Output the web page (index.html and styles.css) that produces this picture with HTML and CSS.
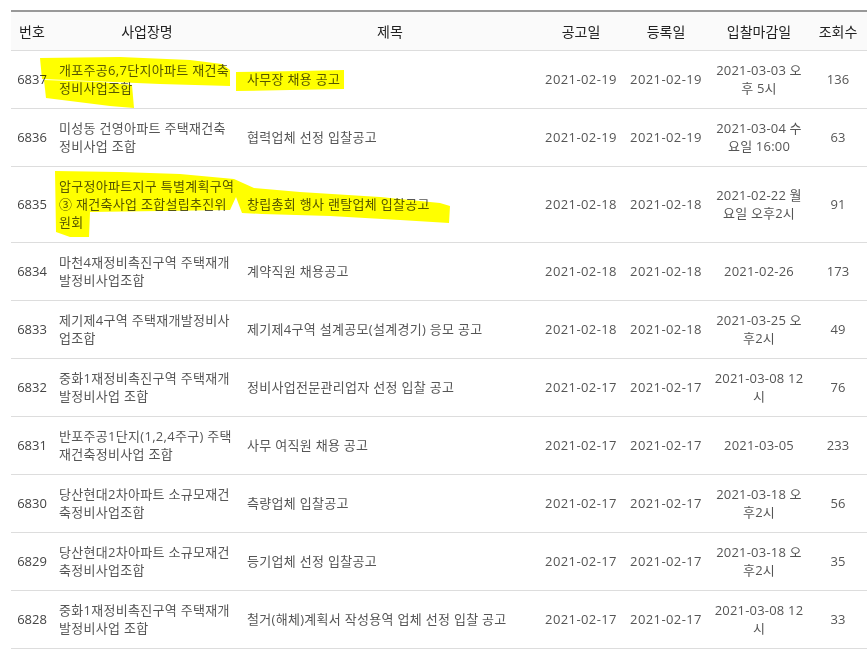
FILE: index.html
```html
<!DOCTYPE html>
<html lang="ko">
<head>
<meta charset="utf-8">
<title>입찰공고</title>
<link rel="stylesheet" href="styles.css">
</head>
<body>
<div class="page">
  <table class="board">
    <colgroup>
      <col class="c-no">
      <col class="c-name">
      <col class="c-title">
      <col class="c-date">
      <col class="c-reg">
      <col class="c-end">
      <col class="c-hit">
    </colgroup>
    <thead>
      <tr>
        <th>번호</th>
        <th>사업장명</th>
        <th>제목</th>
        <th>공고일</th>
        <th>등록일</th>
        <th>입찰마감일</th>
        <th>조회수</th>
      </tr>
    </thead>
    <tbody>
      <tr>
        <td class="no">6837</td>
        <td class="name">개포주공6,7단지아파트 재건축<br>정비사업조합</td>
        <td class="title">사무장 채용 공고</td>
        <td class="date">2021-02-19</td>
        <td class="date">2021-02-19</td>
        <td class="end">2021-03-03 오<br>후 5시</td>
        <td class="hit">136</td>
      </tr>
      <tr>
        <td class="no">6836</td>
        <td class="name">미성동 건영아파트 주택재건축<br>정비사업 조합</td>
        <td class="title">협력업체 선정 입찰공고</td>
        <td class="date">2021-02-19</td>
        <td class="date">2021-02-19</td>
        <td class="end">2021-03-04 수<br>요일 16:00</td>
        <td class="hit">63</td>
      </tr>
      <tr>
        <td class="no">6835</td>
        <td class="name">압구정아파트지구 특별계획구역<br>③ 재건축사업 조합설립추진위<br>원회</td>
        <td class="title">창립총회 행사 랜탈업체 입찰공고</td>
        <td class="date">2021-02-18</td>
        <td class="date">2021-02-18</td>
        <td class="end">2021-02-22 월<br>요일 오후2시</td>
        <td class="hit">91</td>
      </tr>
      <tr>
        <td class="no">6834</td>
        <td class="name">마천4재정비촉진구역 주택재개<br>발정비사업조합</td>
        <td class="title">계약직원 채용공고</td>
        <td class="date">2021-02-18</td>
        <td class="date">2021-02-18</td>
        <td class="end">2021-02-26</td>
        <td class="hit">173</td>
      </tr>
      <tr>
        <td class="no">6833</td>
        <td class="name">제기제4구역 주택재개발정비사<br>업조합</td>
        <td class="title">제기제4구역 설계공모(설계경기) 응모 공고</td>
        <td class="date">2021-02-18</td>
        <td class="date">2021-02-18</td>
        <td class="end">2021-03-25 오<br>후2시</td>
        <td class="hit">49</td>
      </tr>
      <tr>
        <td class="no">6832</td>
        <td class="name">중화1재정비촉진구역 주택재개<br>발정비사업 조합</td>
        <td class="title">정비사업전문관리업자 선정 입찰 공고</td>
        <td class="date">2021-02-17</td>
        <td class="date">2021-02-17</td>
        <td class="end">2021-03-08 12<br>시</td>
        <td class="hit">76</td>
      </tr>
      <tr>
        <td class="no">6831</td>
        <td class="name">반포주공1단지(1,2,4주구) 주택<br>재건축정비사업 조합</td>
        <td class="title">사무 여직원 채용 공고</td>
        <td class="date">2021-02-17</td>
        <td class="date">2021-02-17</td>
        <td class="end">2021-03-05</td>
        <td class="hit">233</td>
      </tr>
      <tr>
        <td class="no">6830</td>
        <td class="name">당산현대2차아파트 소규모재건<br>축정비사업조합</td>
        <td class="title">측량업체 입찰공고</td>
        <td class="date">2021-02-17</td>
        <td class="date">2021-02-17</td>
        <td class="end">2021-03-18 오<br>후2시</td>
        <td class="hit">56</td>
      </tr>
      <tr>
        <td class="no">6829</td>
        <td class="name">당산현대2차아파트 소규모재건<br>축정비사업조합</td>
        <td class="title">등기업체 선정 입찰공고</td>
        <td class="date">2021-02-17</td>
        <td class="date">2021-02-17</td>
        <td class="end">2021-03-18 오<br>후2시</td>
        <td class="hit">35</td>
      </tr>
      <tr>
        <td class="no">6828</td>
        <td class="name">중화1재정비촉진구역 주택재개<br>발정비사업 조합</td>
        <td class="title">철거(해체)계획서 작성용역 업체 선정 입찰 공고</td>
        <td class="date">2021-02-17</td>
        <td class="date">2021-02-17</td>
        <td class="end">2021-03-08 12<br>시</td>
        <td class="hit">33</td>
      </tr>
    </tbody>
  </table>

  <svg class="marker" width="867" height="658" viewBox="0 0 867 658" aria-hidden="true">
    <polygon points="40,58 120,57 190,60 222,64 230,70 230,86 160,84 90,81 42,79"/>
    <polygon points="44,80 100,82 132,85 134,108 110,106 46,98"/>
    <polygon points="236,72 300,71 344,70 344,89 290,90 236,91"/>
    <polygon points="55,171 120,172 180,174 234,179 254,188 300,192 380,197 440,203 450,206 449,223 400,220 330,216 262,214 242,213 236,197 230,210 90,212 89,237 70,237 56,232"/>
  </svg>
</div>
</body>
</html>
```

FILE: styles.css
```css
html,
body {
  margin: 0;
  background: #ffffff;
}

.page {
  position: relative;
  width: 856px;
  padding: 10px 0 0 11px;
}

.board {
  width: 856px;
  border-collapse: collapse;
  table-layout: fixed;
  border-top: 2px solid #999999;
  font-family: "Open Sans", "Noto Sans CJK KR", sans-serif;
}

.c-no { width: 42px; }
.c-name { width: 188px; }
.c-title { width: 298px; }
.c-date { width: 84px; }
.c-reg { width: 86px; }
.c-end { width: 100px; }
.c-hit { width: 58px; }

.board th {
  background: #fafafa;
  font-family: "Noto Sans CJK KR", sans-serif;
  font-size: 14px;
  line-height: 18px;
  font-weight: 400;
  color: #222222;
  padding: 10px 0;
  text-align: center;
  border-bottom: 1px solid #dddddd;
}

.board td {
  font-size: 13px;
  line-height: 18px;
  color: #555555;
  padding: 10px 0 11px;
  border-bottom: 1px solid #dddddd;
  vertical-align: middle;
  white-space: nowrap;
  text-align: center;
}

.board td.name,
.board td.title {
  text-align: left;
  padding-left: 6px;
  letter-spacing: 0.3px;
}

.board td.no {
  color: #444444;
}

.board td.date {
  letter-spacing: 0.4px;
}

.board td.end {
  letter-spacing: 0.2px;
}

.marker {
  position: absolute;
  left: 0;
  top: 0;
  pointer-events: none;
  mix-blend-mode: multiply;
  fill: #ffff00;
}
```
